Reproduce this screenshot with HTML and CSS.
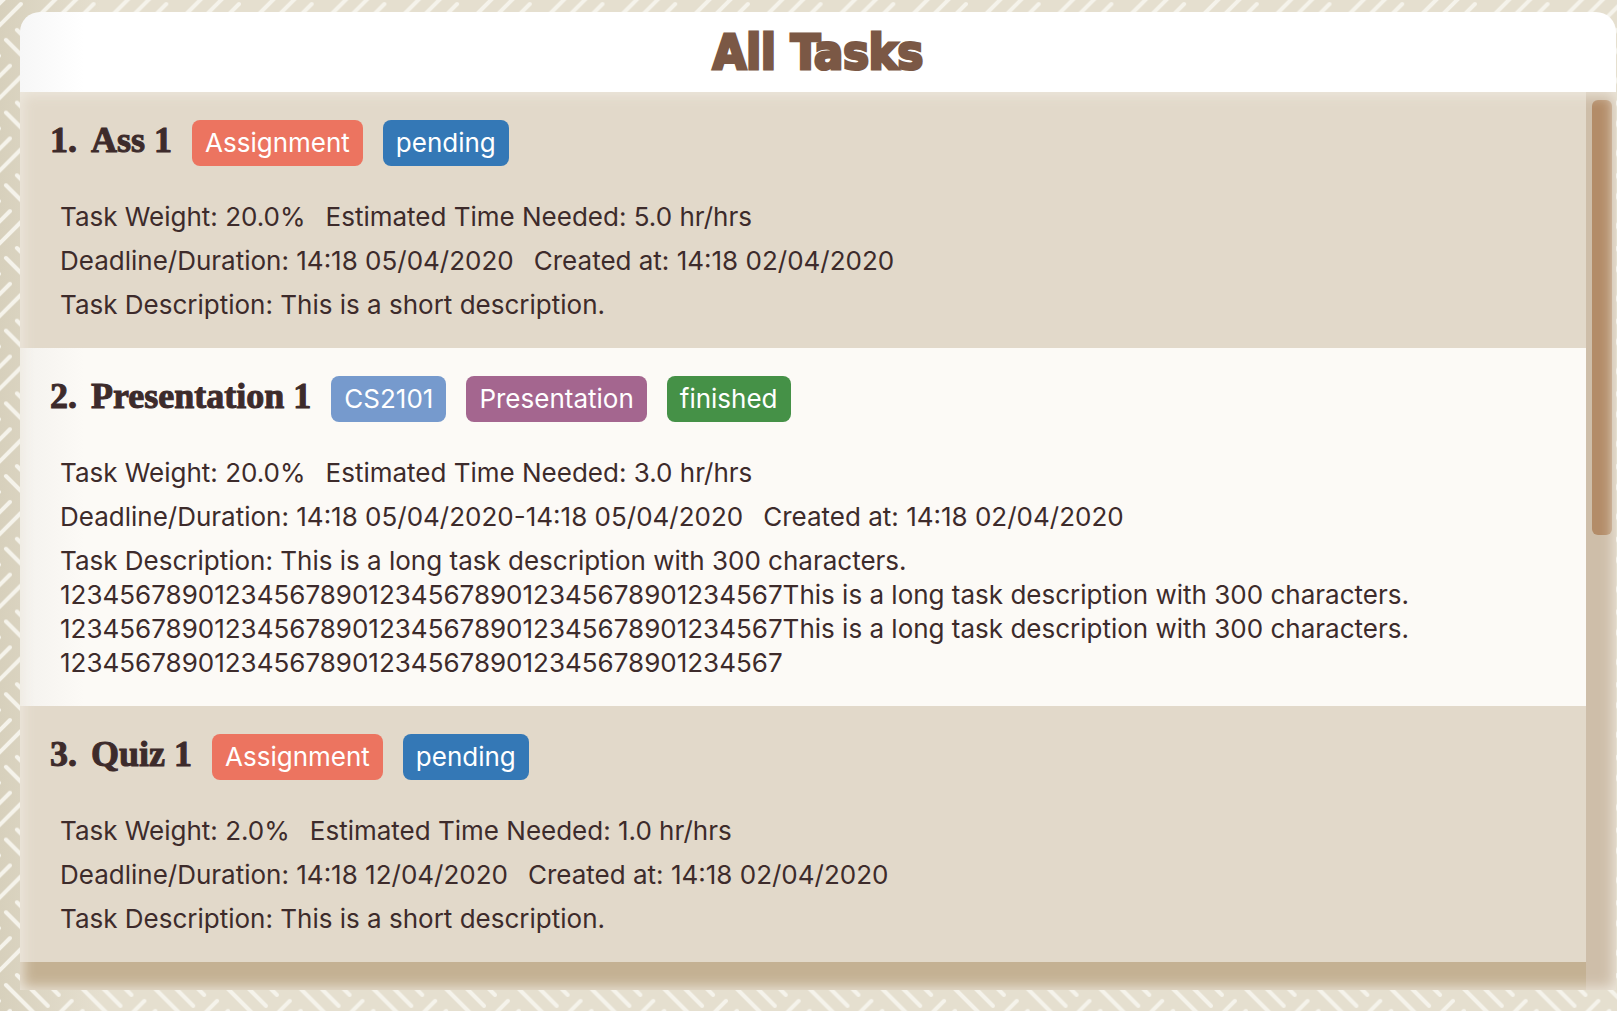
FILE: index.html
```
<!DOCTYPE html>
<html lang="en">
<head>
<meta charset="utf-8">
<title>All Tasks</title>
<meta name="viewport" content="width=device-width, initial-scale=1">
<link rel="stylesheet" href="styles.css">
</head>
<body>
<svg class="backdrop" aria-hidden="true">
  <defs>
    <pattern id="weave" width="72.7" height="72.7" viewBox="0 0 73 73" patternUnits="userSpaceOnUse">
      <g fill="none" stroke="#f5f3eb" stroke-width="4" stroke-linecap="round">
        <path d="M6 40 37 71M17 30 48 61M28 19 59 50"/>
        <path d="M-10 35 21 4M63 35 94 4"/>
        <path d="M-21 97 10 66M52 97 83 66M-21 24 10 -7M52 24 83 -7"/>
        <path d="M41 87 72 56M41 14 72 -17M-32 87 -1 56"/>
      </g>
    </pattern>
  </defs>
  <rect width="100%" height="100%" fill="url(#weave)"/>
</svg>
<main class="panel">
  <header class="panel-header"><h1>All Tasks</h1></header>
  <div class="task-area">
    <ol class="task-list">
      <li class="task">
        <div class="task-heading"><h2><span>1.</span><span>Ass 1</span></h2><span class="tag assignment">Assignment</span><span class="tag pending">pending</span></div>
        <div class="details">
          <p><span>Task Weight: 20.0%</span><span>Estimated Time Needed: 5.0 hr/hrs</span></p>
          <p><span>Deadline/Duration: 14:18 05/04/2020</span><span>Created at: 14:18 02/04/2020</span></p>
          <p>Task Description: This is a short description.</p>
        </div>
      </li>
      <li class="task">
        <div class="task-heading"><h2><span>2.</span><span>Presentation 1</span></h2><span class="tag module">CS2101</span><span class="tag presentation">Presentation</span><span class="tag finished">finished</span></div>
        <div class="details">
          <p><span>Task Weight: 20.0%</span><span>Estimated Time Needed: 3.0 hr/hrs</span></p>
          <p><span>Deadline/Duration: 14:18 05/04/2020-14:18 05/04/2020</span><span>Created at: 14:18 02/04/2020</span></p>
          <p class="description">Task Description: This is a long task description with 300 characters.<br>12345678901234567890123456789012345678901234567This is a long task description with 300 characters.<br>12345678901234567890123456789012345678901234567This is a long task description with 300 characters.<br>12345678901234567890123456789012345678901234567</p>
        </div>
      </li>
      <li class="task">
        <div class="task-heading"><h2><span>3.</span><span>Quiz 1</span></h2><span class="tag assignment">Assignment</span><span class="tag pending">pending</span></div>
        <div class="details">
          <p><span>Task Weight: 2.0%</span><span>Estimated Time Needed: 1.0 hr/hrs</span></p>
          <p><span>Deadline/Duration: 14:18 12/04/2020</span><span>Created at: 14:18 02/04/2020</span></p>
          <p>Task Description: This is a short description.</p>
        </div>
      </li>
    </ol>
    <div class="scroll-track"><div class="scroll-thumb"></div></div>
  </div>
</main>
</body>
</html>
```
FILE: styles.css
```
* { box-sizing: border-box; }
body {
  margin: 0;
  min-height: 100vh;
  padding: 12px 1px 21px 20px;
  display: flex;
  background: linear-gradient(90deg, #d7d0bc, #e5dfcf 100px);
  color: #3d2b2b;
  font: 26px/34px Inter, "Noto Sans", sans-serif;
}
h1, h2, p, ol { margin: 0; padding: 0; }
.backdrop { position: absolute; inset: 0; width: 100%; height: 100%; z-index: -1; }
.panel { flex: 1; display: flex; flex-direction: column; min-width: 0; }
.panel-header {
  height: 80px;
  display: flex;
  align-items: center;
  justify-content: center;
  border-radius: 20px 20px 0 0;
  background: linear-gradient(90deg, #f7f7f7, #fff 64px);
}
h1 {
  color: #7b5845;
  font: 700 48px/60px "DejaVu Sans Condensed", "DejaVu Sans", sans-serif;
  font-stretch: condensed;
  -webkit-text-stroke: 3px #7b5845;
}
.task-area { position: relative; flex: 1; display: flex; background: #c4b193; }
.task-area::after {
  content: "";
  position: absolute;
  inset: 0;
  box-shadow: inset 0 0 14px 2px #eee9df;
  pointer-events: none;
}
.task-list { flex: 1; min-width: 0; list-style: none; }
.task { padding: 28px 20px 26px 30px; background: #e2d9ca; }
.task:nth-child(even) { background: linear-gradient(90deg, #f4f2ee, #fcfaf6 64px); }
.task-heading { display: flex; gap: 20px; height: 46px; }
h2 { display: flex; gap: 14px; font: 700 36px/40px "Liberation Serif", serif; -webkit-text-stroke: 1px; }
.tag { padding: 0 13px; border-radius: 8px; color: #fff; line-height: 46px; }
.assignment { background: #ec7460; }
.pending { background: #3478b6; }
.module { background: #769acd; }
.presentation { background: #a4668f; }
.finished { background: #459147; }
.details { display: grid; gap: 10px; padding: 34px 0 0 10px; }
.details p { display: flex; gap: 20px; }
.details .description { display: block; }
.scroll-track { width: 30px; padding: 8px 4px 0 6px; background: #cebea9; }
.scroll-thumb { height: 435px; border-radius: 6px; background: #b38c68; }
```
